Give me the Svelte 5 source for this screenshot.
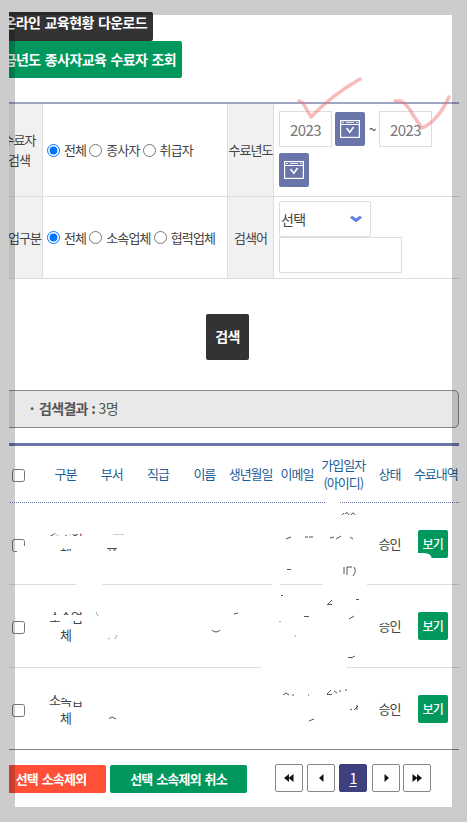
<script>
  // Search form state
  let target = "all";
  let company = "all";
  let fromYear = "2023";
  let toYear = "2023";
  let keyword = "";

  const targets = [
    { value: "all", label: "전체" },
    { value: "worker", label: "종사자" },
    { value: "handler", label: "취급자" },
  ];

  const companies = [
    { value: "all", label: "전체" },
    { value: "own", label: "소속업체" },
    { value: "partner", label: "협력업체" },
  ];

  const columns = [
    "구분",
    "부서",
    "직급",
    "이름",
    "생년월일",
    "이메일",
    "가입일자 (아이디)",
    "상태",
    "수료내역",
  ];

  const members = [
    { type: "소속업체", status: "승인" },
    { type: "소속업체", status: "승인" },
    { type: "소속업체", status: "승인" },
  ];
</script>

{#snippet calendar()}
  <button class="calendar" type="button" aria-label="calendar">
    <svg width="20" height="18" viewBox="0 0 20 18" fill="none" stroke="#fff">
      <rect x="0.6" y="0.6" width="18.8" height="16.8" stroke-width="1.2" />
      <path d="M1 4.5H19" stroke-width="1" />
      <path d="M2 2.5H4M6 2.5H14M16 2.5H18" stroke-width="0.8" />
      <path d="M6.5 8L9.8 12.3L13.6 7" stroke-width="1.5" />
    </svg>
  </button>
{/snippet}

<div class="page">
  <div class="clip">
    <main>
      <!-- Top actions -->
      <div class="actions">
        <button class="btn dark">온라인 교육현황 다운로드</button>
        <button class="btn green">금년도 종사자교육 수료자 조회</button>
      </div>

      <!-- Search form -->
      <div class="search">
        <div class="row first">
          <div class="label">수료자<br />검색</div>
          <div class="field radios">
            {#each targets as t}
              <label>
                <input type="radio" name="target" value={t.value} bind:group={target} />
                <span>{t.label}</span>
              </label>
            {/each}
          </div>
          <div class="label">수료년도</div>
          <div class="field years">
            <input class="year" type="text" bind:value={fromYear} />
            {@render calendar()}
            <span class="tilde">~</span>
            <input class="year" type="text" bind:value={toYear} />
            {@render calendar()}
          </div>
        </div>
        <div class="row second">
          <div class="label">기업구분</div>
          <div class="field radios">
            {#each companies as c}
              <label>
                <input type="radio" name="company" value={c.value} bind:group={company} />
                <span>{c.label}</span>
              </label>
            {/each}
          </div>
          <div class="label">검색어</div>
          <div class="field keyword">
            <button class="select" type="button">
              선택
              <svg width="12" height="8" viewBox="0 0 12 8" fill="none">
                <path d="M1 1.8L6 5.3L11 1.8" stroke="#6580dc" stroke-width="3" />
              </svg>
            </button>
            <input type="text" bind:value={keyword} aria-label="검색어" />
          </div>
        </div>
      </div>

      <button class="submit">검색</button>

      <div class="result"><b>· 검색결과 :</b> 3명</div>

      <!-- Member list -->
      <div class="list">
        <div class="line head">
          <div class="cell"><input type="checkbox" aria-label="all" /></div>
          {#each columns as column}
            <div class="cell">{column}</div>
          {/each}
        </div>
        {#each members as member}
          <div class="line">
            <div class="cell"><input type="checkbox" aria-label="member" /></div>
            <div class="cell type">{member.type}</div>
            <div class="cell blank"></div>
            <div class="cell status">{member.status}</div>
            <div class="cell last"><button class="view">보기</button></div>
          </div>
        {/each}
      </div>

      <!-- Bottom actions -->
      <div class="footer">
        <button class="btn red">선택 소속제외</button>
        <button class="btn green cancel">선택 소속제외 취소</button>
        <nav>
          <button aria-label="first">
            <svg width="10" height="8" viewBox="0 0 10 8"><path d="M5 0V8L0 4ZM9.5 0V8L4.5 4Z" /></svg>
          </button>
          <button aria-label="previous">
            <svg width="5" height="8" viewBox="0 0 5 8"><path d="M4.5 0V8L0 4Z" /></svg>
          </button>
          <button class="current">1</button>
          <button class="next" aria-label="next">
            <svg width="5" height="8" viewBox="0 0 5 8"><path d="M0.5 0V8L5 4Z" /></svg>
          </button>
          <button aria-label="last">
            <svg width="10" height="8" viewBox="0 0 10 8"><path d="M0.5 0V8L5.5 4ZM5 0V8L10 4Z" /></svg>
          </button>
        </nav>
      </div>
    </main>
  </div>

  <!-- Hand-drawn marks and erased personal data -->
  <svg class="marks" width="467" height="822" viewBox="0 0 467 822" fill="none">
    <g fill="#fff">
      <path d="M46 527H88V533L64 535L58 536L55 533L48 537L52 549H61L72 547V549H60V566H46Z" />
      <path d="M46 536H86V548H46ZM46 551H86V566H46Z" />
      <path d="M20 546H26V554H16L18 549Z" />
      <path d="M76 582H102V587H76ZM272 582H280V587H272ZM323 580H367V588H323ZM261 664H342L350 670H261Z" />
      <path d="M325 499H340V506H325Z" />
      <path d="M46 607H84V612H46ZM46 615H84V621H70V626H46V622H60V620H46Z" />
      <path d="M68 692H86V701H72L62 697Z" />
      <path d="M378 619H391V622L378 624Z" />
      <path d="M416 556V553H424Q431 553 432 559H416Z" />
    </g>
    <g class="scraps" stroke="#555" stroke-width="1">
      <path d="M113 534.5H124" stroke="#ccc" />
      <path d="M107 548.5H117M109 550H111M113 550H116" />
      <path d="M342 515L344 513M345 514Q347 511 349 515M351 515Q353 511 355 515" />
      <path d="M286 539L291 537M305 537H308M309 537H313M330 538L334 537M336 539L341 536M350 537L353 539" />
      <path d="M287 569.5H291M344 567V574M347 575V567H352M354 567Q357 571 353 576" />
      <path d="M281 595.5H283M328 604L332 600M327 604.5H332M356 599.5H359M349 619L354 616" />
      <path d="M234 614L238 613M304 616.5H309" />
      <path d="M96 612L98 616M108 639L110 638M115 639L117 635" stroke="#9aa8b5" />
      <path d="M212 630Q216 634 220 630" />
      <path d="M279 621.5H281M294 636H296" stroke="#aaa" />
      <path d="M348 657.5H352M351 658L355 656" />
      <path d="M283 695L286 693L289 695M292 695H294M308 695H309" />
      <path d="M327 694L331 690M327 694.5H332M334 691L337 693M340 690V692M345 690H347" />
      <path d="M350 710L352 709M354 710L358 706M357 705V710" />
      <path d="M109 718.5L112 717L116 719M309 721L314 719" />
    </g>
    <g class="checks">
      <path d="M299 101L303 103L311 117Q332 95 360 79" />
      <path d="M395 101L401 101Q408 105 413 115L422 128Q438 121 449 97" />
    </g>
  </svg>

  <div class="frame"></div>
</div>

<style>
  :global(body) {
    background: #fff;
  }

  .page {
    position: relative;
    box-sizing: border-box;
    width: 467px;
    height: 822px;
    padding: 12px 8px 0 9px;
    overflow: hidden;
    background: #fff;
    color: #444;
    font-family: "Noto Sans CJK KR", sans-serif;
    font-size: 13px;
    letter-spacing: -1px;
    line-height: 20px;
  }

  .page * {
    box-sizing: border-box;
  }

  button,
  input {
    margin: 0;
    font: inherit;
    letter-spacing: inherit;
  }

  .clip {
    overflow: hidden;
  }

  main {
    margin-left: -13px;
  }

  /* Top actions */
  .actions {
    display: flex;
    flex-direction: column;
    align-items: flex-start;
    height: 90px;
  }

  .btn {
    padding: 0;
    border: none;
    border-radius: 2px;
    color: #fff;
    font-weight: 500;
    white-space: nowrap;
  }

  .actions .btn {
    height: 37px;
    padding-bottom: 2px;
    font-size: 14px;
    font-weight: 600;
    letter-spacing: -0.6px;
    word-spacing: 1.6px;
    text-align: right;
  }

  .actions .dark {
    width: 157px;
    height: 29px;
    padding: 0 6px 10px 0;
    background: #333;
  }

  .green {
    width: 186px;
    padding-right: 6px;
    background: #00985d;
  }

  /* Search form */
  .search {
    border-top: 2px solid #9fa6c5;
  }

  .row {
    display: grid;
    grid-template-columns: 47px 185px 46px 185px;
    border-bottom: 1px solid #ddd;
  }

  .first {
    height: 93px;
  }

  .second {
    height: 82px;
  }

  .label {
    display: flex;
    align-items: center;
    justify-content: center;
    border-right: 1px solid #ddd;
    background: #f1f1f1;
    text-align: center;
    white-space: nowrap;
  }

  .field {
    padding-left: 4px;
  }

  .radios {
    display: flex;
    align-items: center;
    gap: 3px;
    border-right: 1px solid #ddd;
    letter-spacing: -0.85px;
  }

  .radios label {
    display: flex;
    align-items: center;
    gap: 4px;
    white-space: nowrap;
  }

  .radios input {
    width: 13px;
    height: 13px;
  }

  .years {
    display: flex;
    flex-wrap: wrap;
    align-items: center;
    align-content: flex-start;
    padding: 7px 20px 0 5px;
    row-gap: 6px;
  }

  .year {
    width: 53px;
    height: 36px;
    padding: 0 10px;
    border: 1px solid #ddd;
    color: #777;
    font-size: 15px;
    letter-spacing: -0.6px;
  }

  .calendar {
    display: flex;
    align-items: center;
    justify-content: center;
    width: 30px;
    height: 34px;
    padding: 0;
    border: none;
    border-radius: 2px;
    background: #6a76aa;
  }

  .year + .calendar {
    margin-left: 3px;
  }

  .tilde + .year + .calendar {
    margin-left: 0;
  }

  .tilde {
    width: 14px;
    padding-left: 4px;
  }

  .keyword {
    display: flex;
    flex-direction: column;
    padding: 4px 0 0 5px;
  }

  .select {
    display: flex;
    align-items: center;
    justify-content: space-between;
    width: 92px;
    height: 36px;
    padding: 0 8px 0 1px;
    border: 1px solid #ddd;
    border-radius: 2px;
    background: #fff;
    color: #444;
    font-size: 14px;
    letter-spacing: -0.7px;
  }

  .keyword input {
    width: 123px;
    height: 36px;
    border: 1px solid #ddd;
  }

  .submit {
    display: block;
    width: 43px;
    height: 46px;
    margin: 35px 0 30px 210px;
    padding: 0 0 2px;
    border: none;
    border-radius: 2px;
    background: #333;
    color: #fff;
    font-size: 14px;
    font-weight: 600;
    letter-spacing: -0.6px;
  }

  .result {
    height: 38px;
    padding-left: 31px;
    border: 1px solid #888;
    border-radius: 5px;
    background: #e9e9e9;
    color: #555;
    font-size: 14px;
    letter-spacing: -0.7px;
    line-height: 35px;
    word-spacing: 1px;
  }

  .result b {
    font-weight: 600;
  }

  /* Member list */
  .list {
    margin-top: 15px;
    border-top: 3px solid #6a76aa;
    border-bottom: 1px solid #888;
  }

  .line {
    display: grid;
    grid-template-columns: repeat(10, 46.3px);
    height: 83px;
    line-height: 18px;
  }

  .line:last-child {
    height: 81px;
  }

  .line:nth-child(2) {
    height: 82px;
  }

  .line:not(:last-child) {
    border-bottom: 1px solid #ddd;
  }

  .line.head {
    height: 57px;
    border-bottom: 1px dotted #6a76aa;
    color: #1c5f98;
    white-space: nowrap;
  }

  .head .cell:nth-child(8) {
    white-space: normal;
  }

  .cell {
    display: flex;
    align-items: center;
    justify-content: center;
    text-align: center;
  }

  .cell input {
    width: 13px;
    height: 13px;
    margin: 3px 2px 0 0;
  }

  .type {
    padding: 0 6px;
    word-break: break-all;
  }

  .blank {
    grid-column: span 6;
  }

  .last {
    padding-right: 6px;
  }

  .view {
    width: 30px;
    height: 28px;
    padding: 0;
    border: none;
    border-radius: 2px;
    background: #00985d;
    color: #fff;
    font-size: 12px;
    font-weight: 500;
    letter-spacing: -0.8px;
  }

  /* Bottom actions */
  .footer {
    display: flex;
    padding-top: 14px;
  }

  .footer .btn {
    height: 28px;
    margin-top: 1px;
    font-weight: 600;
    letter-spacing: -0.8px;
    word-spacing: 1.5px;
  }

  .red {
    width: 110px;
    background: #ff4f36;
  }

  .footer .cancel {
    width: 137px;
    margin-left: 4px;
    padding: 0;
  }

  nav {
    display: flex;
    gap: 4px;
    margin-left: 28px;
  }

  nav button {
    display: flex;
    align-items: center;
    justify-content: center;
    width: 28px;
    height: 28px;
    padding: 0;
    border: 1px solid #888;
    border-radius: 2px;
    background: #fff;
  }

  nav .next {
    margin: 0 -1px 0 1px;
  }

  nav svg {
    fill: #111;
  }

  nav .current {
    border-color: #3d407c;
    background: #3d407c;
    color: #fff;
    font-size: 15px;
    text-decoration: underline;
    text-underline-offset: 2px;
  }

  .marks {
    position: absolute;
    top: 0;
    left: 0;
    pointer-events: none;
  }

  .checks {
    stroke: #ee6a6a;
    stroke-width: 3.5;
    stroke-linecap: round;
    stroke-linejoin: round;
    opacity: 0.45;
  }

  /* Translucent frame around the page */
  .frame {
    position: absolute;
    inset: 0;
    border: 15px solid rgba(0, 0, 0, 0.2);
    pointer-events: none;
  }
</style>
